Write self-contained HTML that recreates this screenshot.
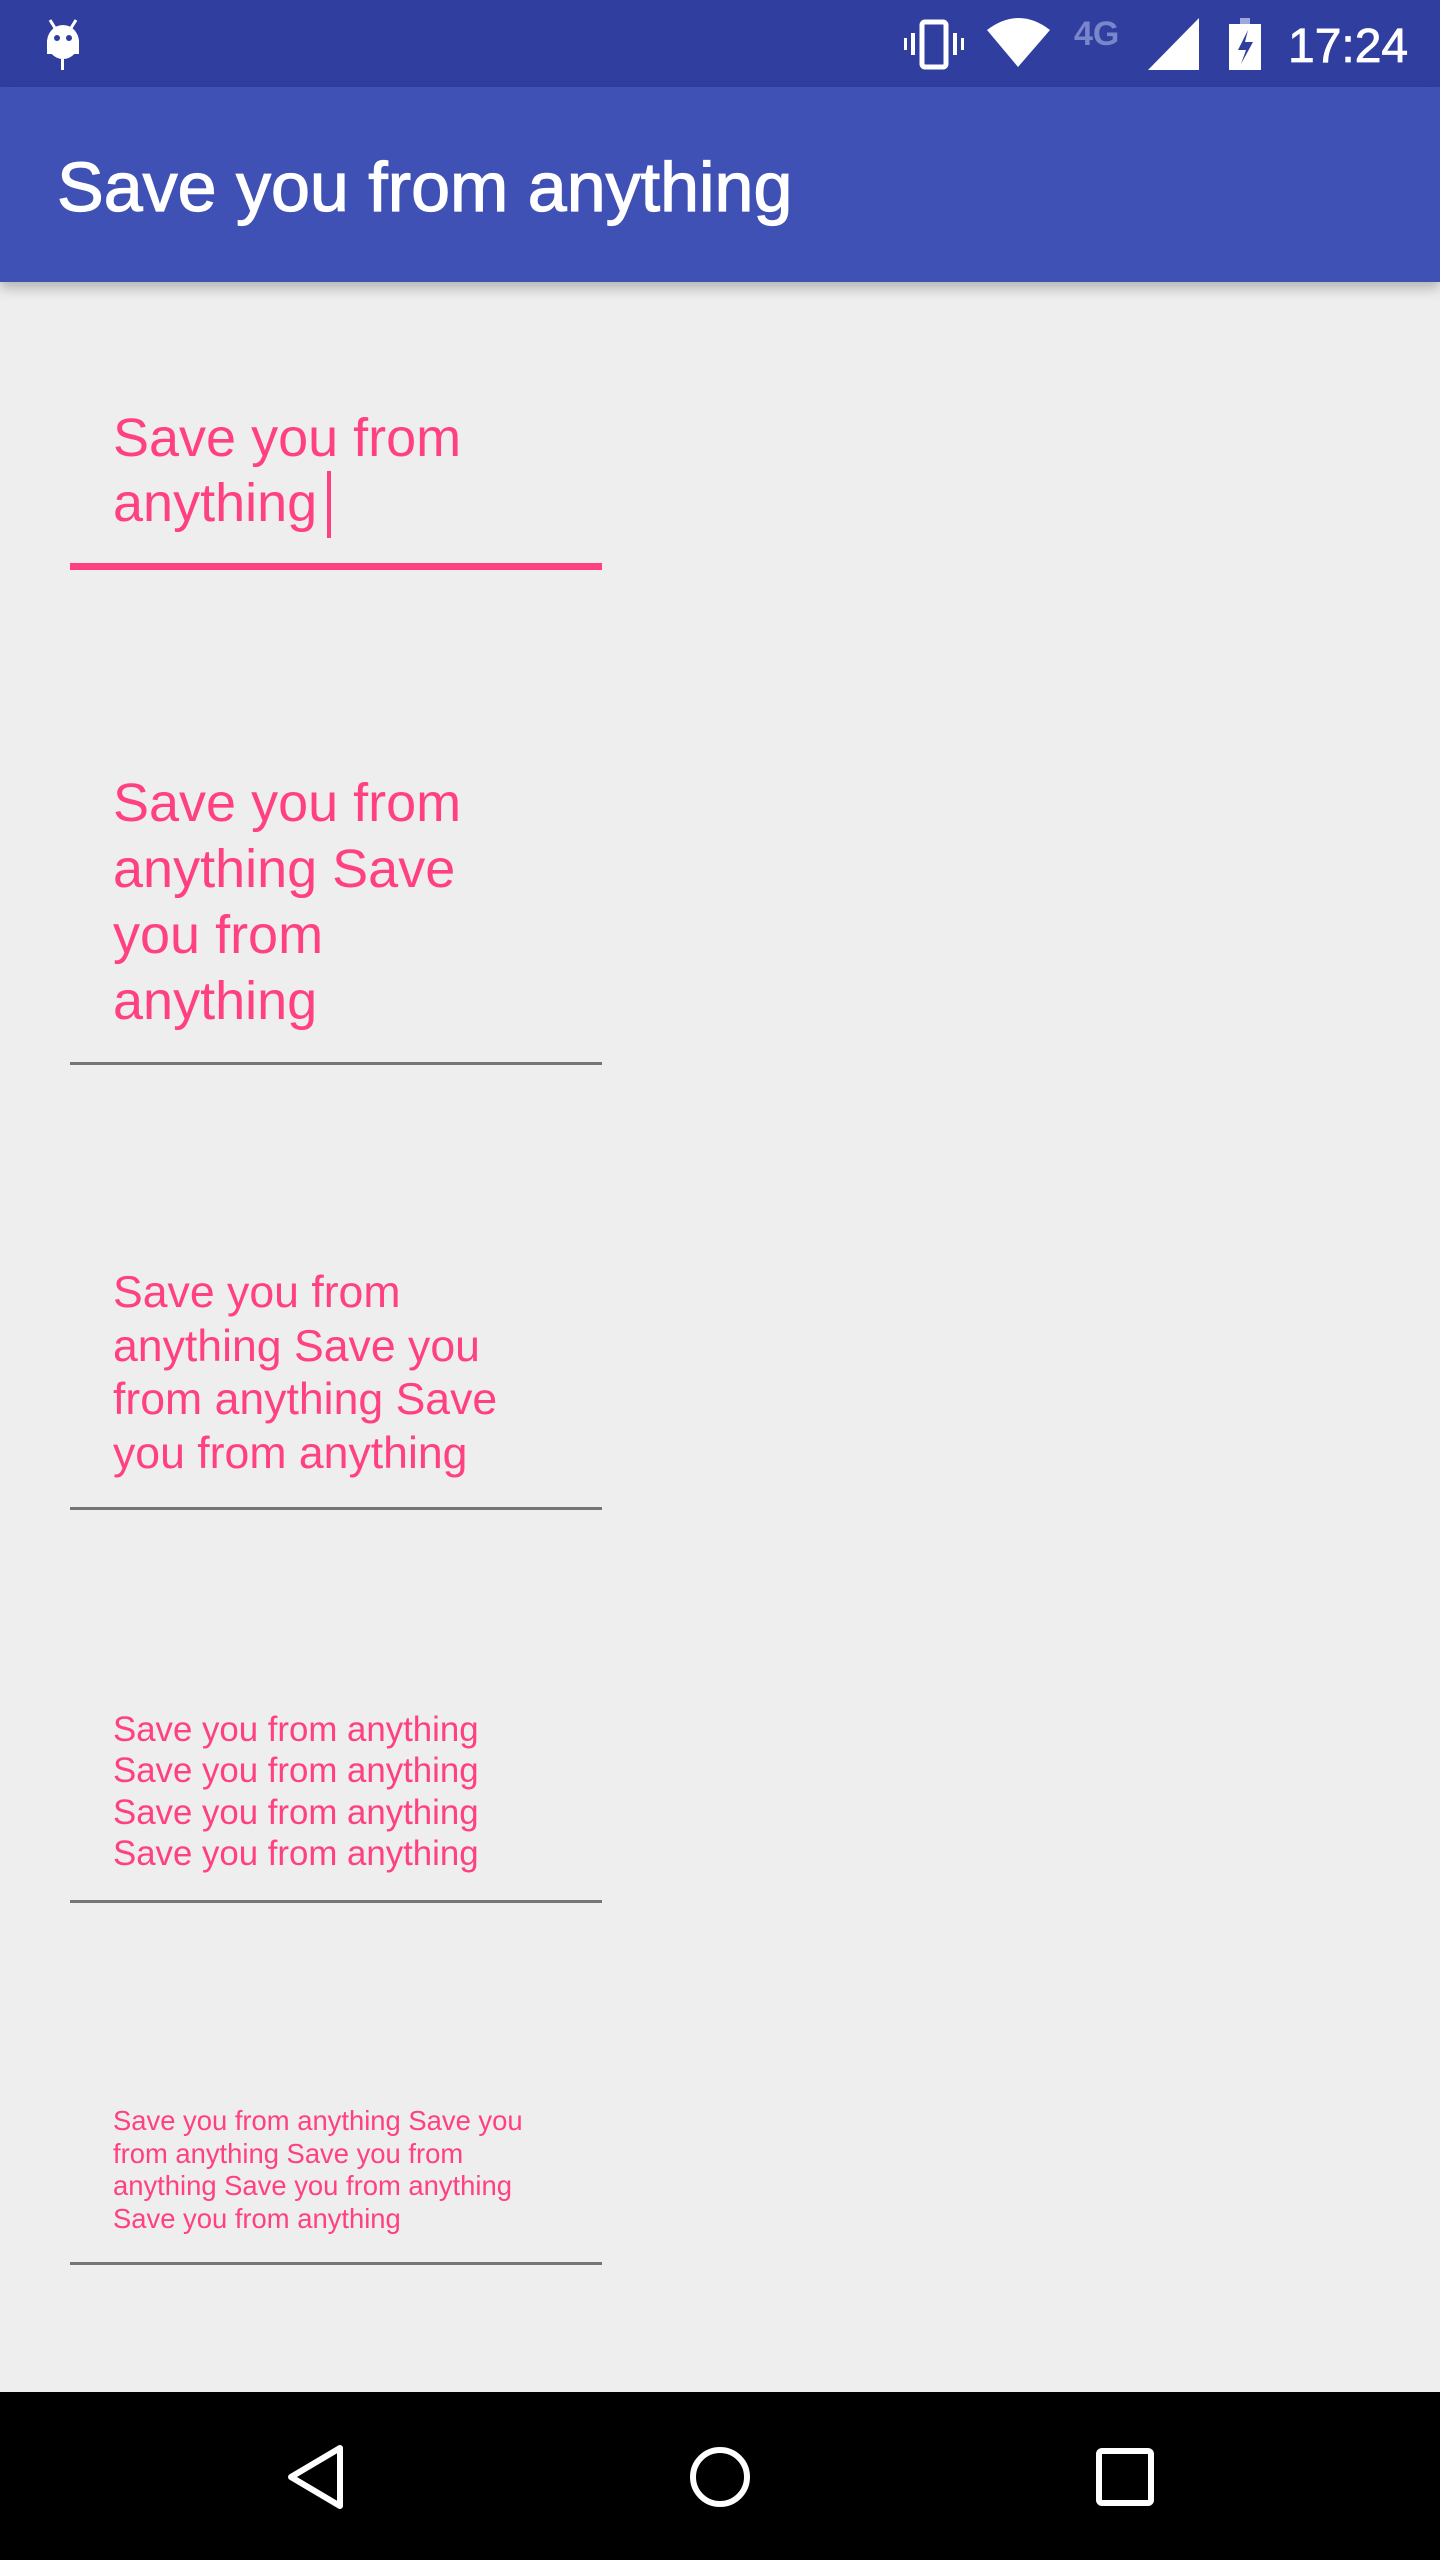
<!DOCTYPE html>
<html><head><meta charset="utf-8"><style>
html,body{margin:0;padding:0}
body{width:1440px;height:2560px;position:relative;background:#eeeeee;overflow:hidden;font-family:"Liberation Sans",sans-serif}
.abs{position:absolute}
.t{position:absolute;left:113px;color:#ff4081;white-space:nowrap}
.line{position:absolute;left:70px;width:532px;height:3px;background:#757575}
</style></head><body>
<div class="abs" style="left:0;top:0;width:1440px;height:87px;background:#303f9f"></div>
<div class="abs" style="left:0;top:87px;width:1440px;height:195px;background:#3f51b5;box-shadow:0 6px 12px rgba(0,0,0,0.25)"></div>
<svg class="abs" style="left:0;top:0" width="1440" height="87" viewBox="0 0 1440 87">
 <g fill="#fff">
  <ellipse cx="63" cy="42" rx="16" ry="17"/>
  <rect x="47" y="40" width="32" height="14"/>
  <rect x="61" y="55" width="3" height="15"/>
  <line x1="50" y1="20" x2="55" y2="28" stroke="#fff" stroke-width="3"/>
  <line x1="76" y1="20" x2="71" y2="28" stroke="#fff" stroke-width="3"/>
 </g>
 <circle cx="57" cy="38" r="3" fill="#303f9f"/><circle cx="69" cy="38" r="3" fill="#303f9f"/>
 <rect x="922" y="22" width="24" height="45" rx="3" fill="none" stroke="#fff" stroke-width="5"/>
 <rect x="911" y="33" width="4" height="22" fill="#fff"/><rect x="904" y="38" width="3" height="12" fill="#fff"/>
 <rect x="953" y="33" width="4" height="22" fill="#fff"/><rect x="961" y="38" width="3" height="12" fill="#fff"/>
 <path d="M987 30 Q1019 6 1050 30 L1018 67 Z" fill="#fff"/>
 <text x="1074" y="45" font-size="34" font-weight="bold" fill="#7986cb" font-family="Liberation Sans">4G</text>
 <path d="M1199 18 L1199 70 L1148 70 Z" fill="#fff"/>
 <rect x="1240" y="18" width="10" height="6" fill="#9fa8da"/>
 <rect x="1229" y="24" width="32" height="46" fill="#fff"/>
 <path d="M1248 30 L1238 50 L1246 50 L1241 64 L1253 42 L1245 42 Z" fill="#303f9f"/>
 <text x="1288" y="62" font-size="48" fill="#fff" stroke="#fff" stroke-width="0.8" font-family="Liberation Sans">17:24</text>
</svg>
<div class="abs" style="left:57px;top:153px;font-size:70px;line-height:68px;color:#fff;white-space:nowrap;-webkit-text-stroke:1.2px #fff">Save you from anything</div>

<div class="t" style="top:406px;font-size:54px;line-height:65px">Save you from<br>anything</div>
<div class="abs" style="left:327px;top:471px;width:4px;height:67px;background:#ff4081"></div>
<div class="abs" style="left:70px;top:563px;width:532px;height:7px;background:#ff4081"></div>

<div class="t" style="top:770px;font-size:54px;line-height:66px">Save you from<br>anything Save<br>you from<br>anything</div>
<div class="line" style="top:1062px"></div>

<div class="t" style="top:1266px;font-size:44.6px;line-height:53.5px">Save you from<br>anything Save you<br>from anything Save<br>you from anything</div>
<div class="line" style="top:1507px"></div>

<div class="t" style="top:1709px;font-size:34.8px;line-height:41.3px">Save you from anything<br>Save you from anything<br>Save you from anything<br>Save you from anything</div>
<div class="line" style="top:1900px"></div>

<div class="t" style="top:2105px;font-size:27.4px;line-height:32.7px">Save you from anything Save you<br>from anything Save you from<br>anything Save you from anything<br>Save you from anything</div>
<div class="line" style="top:2262px"></div>

<div class="abs" style="left:0;top:2392px;width:1440px;height:168px;background:#000"></div>
<svg class="abs" style="left:0;top:2392px" width="1440" height="168" viewBox="0 0 1440 168">
 <path d="M340 56 L340 114 L291 85 Z" fill="none" stroke="#fff" stroke-width="6" stroke-linejoin="round"/>
 <circle cx="720" cy="85" r="27" fill="none" stroke="#fff" stroke-width="6"/>
 <rect x="1099" y="59" width="52" height="52" rx="3" fill="none" stroke="#fff" stroke-width="6"/>
</svg>
</body></html>
